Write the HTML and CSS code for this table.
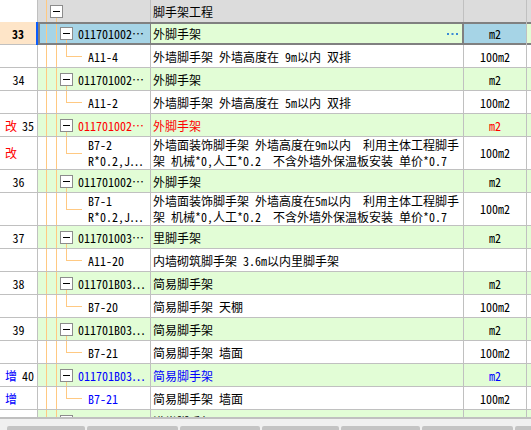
FILE: index.html
```html
<!DOCTYPE html>
<html>
<head>
<meta charset="utf-8">
<link rel="stylesheet" href="styles.css">
</head>
<body>
<div class="grid">
  <div class="row head">
    <div class="c num"></div>
    <div class="c code"><span class="box"></span></div>
    <div class="c name">脚手架工程</div>
    <div class="c unit"></div>
    <div class="c rest"></div>
  </div>
  <div class="row parent sel">
    <div class="c num"><b>33</b></div>
    <div class="c code"><span class="box"></span><span class="t">011701002…</span></div>
    <div class="c name"><span class="nm">外脚手架</span><svg class="dots" width="11" height="2" viewBox="0 0 11 2"><rect x="0" y="0" width="2" height="2" fill="#3a8ad6"/><rect x="4.5" y="0" width="2" height="2" fill="#3a8ad6"/><rect x="9" y="0" width="2" height="2" fill="#3a8ad6"/></svg></div>
    <div class="c unit">m2</div>
    <div class="c rest"></div>
  </div>
  <div class="row child">
    <div class="c num"></div>
    <div class="c code"><span class="t">A11-4</span></div>
    <div class="c name">外墙脚手架 外墙高度在 9m以内 双排</div>
    <div class="c unit">100m2</div>
    <div class="c rest"></div>
  </div>
  <div class="row parent">
    <div class="c num">34</div>
    <div class="c code"><span class="box"></span><span class="t">011701002…</span></div>
    <div class="c name">外脚手架</div>
    <div class="c unit">m2</div>
    <div class="c rest"></div>
  </div>
  <div class="row child">
    <div class="c num"></div>
    <div class="c code"><span class="t">A11-2</span></div>
    <div class="c name">外墙脚手架 外墙高度在 5m以内 双排</div>
    <div class="c unit">100m2</div>
    <div class="c rest"></div>
  </div>
  <div class="row parent">
    <div class="c num mk"><span class="red">改</span><span>35</span></div>
    <div class="c code"><span class="box"></span><span class="t red">011701002…</span></div>
    <div class="c name red">外脚手架</div>
    <div class="c unit red">m2</div>
    <div class="c rest"></div>
  </div>
  <div class="row child dbl">
    <div class="c num mk"><span class="red">改</span></div>
    <div class="c code"><span class="t">B7-2<br>R*0.2,J…</span></div>
    <div class="c name long">外墙面装饰脚手架 外墙高度在9m以内  利用主体工程脚手<br>架 机械*0,人工*0.2  不含外墙外保温板安装 单价*0.7</div>
    <div class="c unit">100m2</div>
    <div class="c rest"></div>
  </div>
  <div class="row parent">
    <div class="c num">36</div>
    <div class="c code"><span class="box"></span><span class="t">011701002…</span></div>
    <div class="c name">外脚手架</div>
    <div class="c unit">m2</div>
    <div class="c rest"></div>
  </div>
  <div class="row child dbl">
    <div class="c num"></div>
    <div class="c code"><span class="t">B7-1<br>R*0.2,J…</span></div>
    <div class="c name long">外墙面装饰脚手架 外墙高度在5m以内  利用主体工程脚手<br>架 机械*0,人工*0.2  不含外墙外保温板安装 单价*0.7</div>
    <div class="c unit">100m2</div>
    <div class="c rest"></div>
  </div>
  <div class="row parent">
    <div class="c num">37</div>
    <div class="c code"><span class="box"></span><span class="t">011701003…</span></div>
    <div class="c name">里脚手架</div>
    <div class="c unit">m2</div>
    <div class="c rest"></div>
  </div>
  <div class="row child">
    <div class="c num"></div>
    <div class="c code"><span class="t">A11-20</span></div>
    <div class="c name">内墙砌筑脚手架 3.6m以内里脚手架</div>
    <div class="c unit"></div>
    <div class="c rest"></div>
  </div>
  <div class="row parent">
    <div class="c num">38</div>
    <div class="c code"><span class="box"></span><span class="t">011701B03…</span></div>
    <div class="c name">简易脚手架</div>
    <div class="c unit">m2</div>
    <div class="c rest"></div>
  </div>
  <div class="row child">
    <div class="c num"></div>
    <div class="c code"><span class="t">B7-20</span></div>
    <div class="c name">简易脚手架 天棚</div>
    <div class="c unit">100m2</div>
    <div class="c rest"></div>
  </div>
  <div class="row parent">
    <div class="c num">39</div>
    <div class="c code"><span class="box"></span><span class="t">011701B03…</span></div>
    <div class="c name">简易脚手架</div>
    <div class="c unit">m2</div>
    <div class="c rest"></div>
  </div>
  <div class="row child">
    <div class="c num"></div>
    <div class="c code"><span class="t">B7-21</span></div>
    <div class="c name">简易脚手架 墙面</div>
    <div class="c unit">100m2</div>
    <div class="c rest"></div>
  </div>
  <div class="row parent">
    <div class="c num mk"><span class="blue">增</span><span>40</span></div>
    <div class="c code"><span class="box"></span><span class="t blue">011701B03…</span></div>
    <div class="c name blue">简易脚手架</div>
    <div class="c unit blue">m2</div>
    <div class="c rest"></div>
  </div>
  <div class="row child">
    <div class="c num mk"><span class="blue">增</span></div>
    <div class="c code"><span class="t blue">B7-21</span></div>
    <div class="c name">简易脚手架 墙面</div>
    <div class="c unit">100m2</div>
    <div class="c rest"></div>
  </div>
  <div class="row parent">
    <div class="c num">41</div>
    <div class="c code"><span class="box"></span><span class="t">011701B04…</span></div>
    <div class="c name">满堂脚手架</div>
    <div class="c unit">m2</div>
    <div class="c rest"></div>
  </div>
</div>
<div class="band"></div>
<div class="foot">
  <span class="btn b1"></span><span class="btn b2"></span><span class="btn b3"></span><span class="btn b4"></span><span class="btn b5"></span><span class="btn b6"></span><span class="btn b7"></span>
</div>
</body>
</html>
```
FILE: styles.css
```css
* { box-sizing: border-box; }
html, body { margin: 0; padding: 0; }
body {
  width: 531px;
  height: 430px;
  overflow: hidden;
  background: #fff;
  color: #000;
  font-family: "Noto Sans Mono CJK SC", "Noto Sans CJK SC", sans-serif;
  font-size: 12px;
  line-height: 17px;
}
.grid { height: 417px; overflow: hidden; }
.row {
  display: grid;
  grid-template-columns: 38px 113px 313px 63px 1fr;
  height: 23px;
  border-bottom: 1px solid #c0c0c0;
}
.row.dbl { height: 33px; line-height: 16px; }
.row.head { height: 22px; border-bottom: none; }
.c {
  border-right: 1px solid #c0c0c0;
  display: flex;
  align-items: center;
  white-space: nowrap;
  min-width: 0;
}
.rest { border-right: none; }
.num { justify-content: center; }
.num.mk { justify-content: space-between; padding: 0 3px 0 5px; }
.name { padding-left: 2px; }
.name.long { white-space: pre; }
.unit { justify-content: center; }

/* tree column */
.code {
  --ln: #ffc982;
  background-repeat: no-repeat;
  background-image:
    linear-gradient(var(--ln), var(--ln)),
    linear-gradient(var(--ln), var(--ln));
  background-size: 1px 100%, 1px 100%;
  background-position: 8px 0, 18px 0;
}
.parent .code {
  padding-left: 22px;
  background-image:
    linear-gradient(var(--ln), var(--ln)),
    linear-gradient(var(--ln), var(--ln)),
    linear-gradient(var(--ln), var(--ln));
  background-size: 1px 100%, 1px 100%, 1px 50%;
  background-position: 8px 0, 18px 0, 28px 100%;
}
.child .code {
  padding-left: 50px;
  background-image:
    linear-gradient(var(--ln), var(--ln)),
    linear-gradient(var(--ln), var(--ln)),
    linear-gradient(var(--ln), var(--ln)),
    linear-gradient(var(--ln), var(--ln));
  background-size: 1px 100%, 1px 100%, 1px 50%, 16px 1px;
  background-position: 8px 0, 18px 0, 28px 0, 28px 50%;
}
.head .code {
  padding-left: 12px;
  background-size: 1px 100%, 1px 50%;
  background-position: 8px 0, 18px 100%;
}
.box {
  flex: none;
  width: 13px;
  height: 13px;
  border: 1px solid #8c8c8c;
  background: #fff;
  position: relative;
  margin-right: 5px;
}
.box::after {
  content: "";
  position: absolute;
  left: 2px;
  top: 5px;
  width: 7px;
  height: 1px;
  background: #000;
}

/* row colours */
.head .code, .head .name, .head .unit, .head .rest { background-color: #dcdcdc; }
.parent .code, .parent .name, .parent .unit, .parent .rest { background-color: #e2fdd6; }

/* selected row */
.sel { border-bottom: none; }
.sel .num {
  background: #fee5c8;
  border-right: 2px solid #0a5cff;
  box-shadow: inset 0 -1px #c0c0c0;
}
.sel .code {
  background-color: #a6d4e6;
  border-right-color: #808080;
  box-shadow: inset 2px 0 #808080, inset 0 2px #808080, inset 0 -2px #808080;
}
.sel .name {
  justify-content: space-between;
  padding-right: 5px;
  border-right-color: #808080;
  box-shadow: inset -1px 0 #808080, inset 0 2px #808080, inset 0 -2px #808080;
}
.sel .unit {
  background-color: #a6d4e6;
  box-shadow: inset 0 2px #808080, inset 0 -2px #808080;
}
.sel .rest { box-shadow: inset 0 2px #808080, inset 0 -2px #808080; }
.dots { flex: none; margin-top: 1px; }

.red { color: #ff0000; }
.blue { color: #0000ff; }

.band { height: 2px; background: #c0c0c0; }
.foot {
  height: 11px;
  background: #f0f0f0;
  padding: 7px 0 0 7px;
  display: flex;
  gap: 2px;
}
.btn {
  height: 4px;
  background: #c4c4c4;
  border-radius: 2px 2px 0 0;
  flex: none;
}
.b1 { width: 78px; }
.b2 { width: 91px; }
.b3 { width: 80px; }
.b4 { width: 77px; }
.b5 { width: 79px; }
.b6 { width: 91px; }
.b7 { width: 30px; }
```
